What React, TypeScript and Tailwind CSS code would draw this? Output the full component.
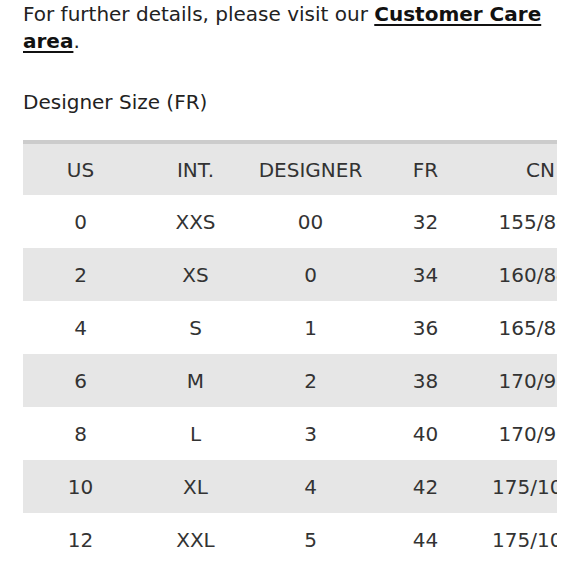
const rows = [
  ['0', 'XXS', '00', '32', '155/80A'],
  ['2', 'XS', '0', '34', '160/84A'],
  ['4', 'S', '1', '36', '165/88A'],
  ['6', 'M', '2', '38', '170/92A'],
  ['8', 'L', '3', '40', '170/96A'],
  ['10', 'XL', '4', '42', '175/100A'],
  ['12', 'XXL', '5', '44', '175/104A'],
];

const headers = ['US', 'INT.', 'DESIGNER', 'FR', 'CN'];

export default function App() {
  return (
    <div
      className="w-[580px] h-[580px] overflow-hidden bg-white text-[#222] px-[23px]"
      style={{ fontFamily: '"DejaVu Sans", "Liberation Sans", sans-serif' }}
    >
      <p className="text-[20px] leading-[27px] pt-[1px]">
        For further details, please visit our{' '}
        <a className="font-bold underline underline-offset-[3px] decoration-2 text-[#111]">Customer Care area</a>.
      </p>
      <h3 className="text-[20px] leading-[27px] mt-[34px]">Designer Size (FR)</h3>

      <div className="mt-[24px] w-[534px] overflow-hidden">
        <table className="w-[640px] table-fixed border-collapse text-[20px] text-[#333]">
          <thead>
            <tr className="bg-[#e6e6e6] border-t-4 border-[#cccccc]">
              {headers.map((h) => (
                <th key={h} className="w-[115px] h-[53px] font-normal text-center">
                  {h}
                </th>
              ))}
              <th className="w-[65px]"></th>
            </tr>
          </thead>
          <tbody>
            {rows.map((r, i) => (
              <tr key={i} className={i % 2 === 1 ? 'bg-[#e6e6e6]' : 'bg-white'}>
                {r.map((c, j) => (
                  <td key={j} className="h-[53px] text-center whitespace-nowrap">
                    {c}
                  </td>
                ))}
                <td></td>
              </tr>
            ))}
          </tbody>
        </table>
      </div>
    </div>
  );
}
